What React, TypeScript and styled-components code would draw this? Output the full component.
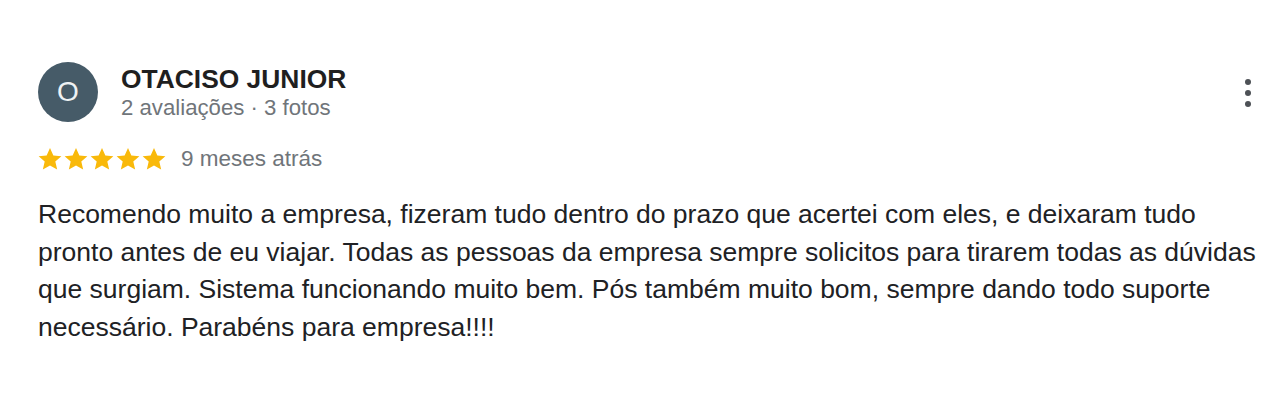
import React from "react";
import styled, { createGlobalStyle } from "styled-components";

const Global = createGlobalStyle`
  html, body { margin: 0; padding: 0; background: #ffffff; }
  body { font-family: "Liberation Sans", Arial, sans-serif; }
`;

const Card = styled.div`
  width: 1280px;
  height: 400px;
  box-sizing: border-box;
  padding: 62px 0 0 38px;
  position: relative;
  background: #fff;
`;

const Header = styled.div`
  display: flex;
  align-items: flex-start;
`;

const Avatar = styled.div`
  width: 60px;
  height: 60px;
  border-radius: 50%;
  background: #465b68;
  color: #eef2f4;
  display: flex;
  align-items: center;
  justify-content: center;
  font-size: 28px;
  flex-shrink: 0;
`;

const Info = styled.div`
  margin-left: 23px;
  padding-top: 2px;
  display: flex;
  flex-direction: column;
`;

const Name = styled.div`
  font-weight: 700;
  font-size: 26.4px;
  line-height: 30px;
  color: #1f1f1f;
`;

const Meta = styled.div`
  font-size: 22.2px;
  line-height: 27px;
  color: #70757a;
`;

const MoreButton = styled.button`
  position: absolute;
  top: 73px;
  right: 20px;
  width: 24px;
  height: 40px;
  border: 0;
  background: none;
  padding: 0;
  display: flex;
  flex-direction: column;
  align-items: center;
  justify-content: center;
  gap: 5px;
`;

const Dot = styled.span`
  width: 6px;
  height: 6px;
  border-radius: 50%;
  background: #4d5156;
`;

const RatingRow = styled.div`
  display: flex;
  align-items: center;
  margin-top: 24px;
  height: 26px;
`;

const Stars = styled.div`
  display: flex;
  margin-left: -1px;
`;

const When = styled.span`
  margin-left: 14px;
  font-size: 22.5px;
  color: #70757a;
`;

const Body = styled.p`
  margin: 24px 0 0 0;
  width: 1232px;
  font-size: 26.5px;
  line-height: 37.5px;
  color: #202124;
`;

const Star = () => (
  <svg width="26" height="26" viewBox="0 0 24 24">
    <path
      fill="#f9b90a"
      d="M12 1.8l3.1 6.9 7.4.7-5.6 5 1.7 7.4L12 17.9l-6.6 3.9 1.7-7.4-5.6-5 7.4-.7z"
    />
  </svg>
);

export default function App() {
  return (
    <>
      <Global />
      <Card>
        <Header>
          <Avatar>O</Avatar>
          <Info>
            <Name>OTACISO JUNIOR</Name>
            <Meta>2 avaliações · 3 fotos</Meta>
          </Info>
        </Header>
        <MoreButton aria-label="Mais opções">
          <Dot />
          <Dot />
          <Dot />
        </MoreButton>
        <RatingRow>
          <Stars>
            <Star />
            <Star />
            <Star />
            <Star />
            <Star />
          </Stars>
          <When>9 meses atrás</When>
        </RatingRow>
        <Body>
          Recomendo muito a empresa, fizeram tudo dentro do prazo que acertei com eles, e deixaram tudo
          pronto antes de eu viajar. Todas as pessoas da empresa sempre solicitos para tirarem todas as dúvidas
          que surgiam. Sistema funcionando muito bem. Pós também muito bom, sempre dando todo suporte
          necessário. Parabéns para empresa!!!!
        </Body>
      </Card>
    </>
  );
}
